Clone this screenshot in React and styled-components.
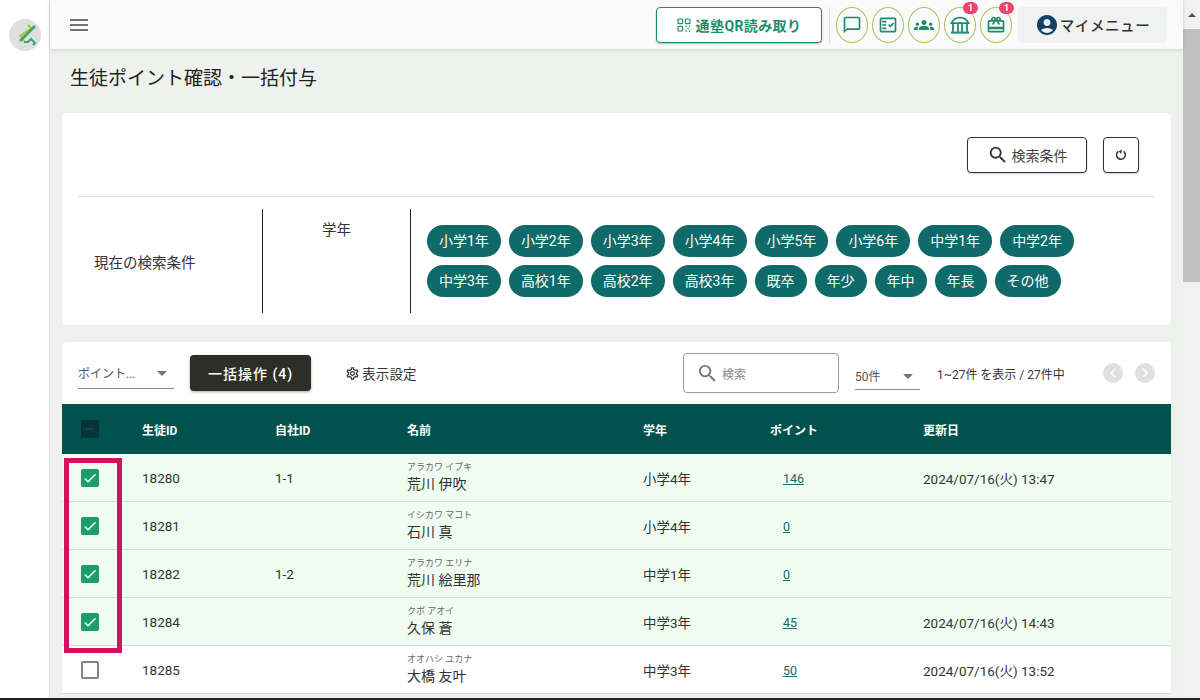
import styled, { createGlobalStyle } from 'styled-components';
import {
  MdMenu,
  MdOutlineChatBubbleOutline,
  MdOutlineFactCheck,
  MdGroups,
  MdAccountCircle,
  MdSearch,
  MdOutlineSettings,
  MdArrowDropDown,
  MdChevronLeft,
  MdChevronRight,
  MdCheck,
  MdRemove,
  MdOutlineRedeem,
} from 'react-icons/md';

const FONT = `Roboto, "Noto Sans CJK JP", sans-serif`;

const GlobalStyle = createGlobalStyle`
  html, body {
    margin: 0;
    padding: 0;
    height: 100%;
    overflow: hidden;
  }
  body {
    font-family: ${FONT};
    color: #222;
  }
  * {
    box-sizing: border-box;
  }
`;

const Page = styled.div`
  display: flex;
  width: 1200px;
  height: 700px;
  overflow: hidden;
  background: #eef1ee;
  border-bottom: 2px solid #222;
`;

const Sidebar = styled.aside`
  flex: 0 0 50px;
  background: #fff;
  border-right: 1px solid #ddd;
  padding: 19px 0 0 9px;
`;

const Main = styled.div`
  flex: 0 0 1133px;
  display: flex;
  flex-direction: column;
  min-width: 0;
`;

const ScrollTrack = styled.div`
  flex: 0 0 17px;
  background: #f1f1f1;
  display: flex;
  flex-direction: column;
  align-items: center;
`;

const ScrollArrow = styled.div`
  height: 17px;
  margin-top: 0;
  padding-top: 6px;
  width: 100%;
  display: flex;
  justify-content: center;

  &::before {
    content: '';
    border-left: 4px solid transparent;
    border-right: 4px solid transparent;
    border-bottom: 4px solid #505050;
  }
`;

const ScrollThumb = styled.div`
  width: 100%;
  height: 253px;
  margin-top: 12px;
  background: #c1c1c1;
`;

const Header = styled.header`
  flex: 0 0 49px;
  background: #fafafa;
  display: flex;
  align-items: center;
  padding: 0 16px 0 17px;
  box-shadow: 0 1px 4px rgba(0, 0, 0, 0.14);
  position: relative;
`;

const MenuButton = styled.div`
  display: flex;
  color: #757575;
  font-size: 24px;
  margin-right: auto;
`;

const QrButton = styled.button`
  display: flex;
  align-items: center;
  justify-content: center;
  gap: 5px;
  width: 166px;
  height: 36px;
  background: #fff;
  border: 1px solid #1c8c6b;
  border-radius: 4px;
  color: #1c8c6b;
  font: 700 14px ${FONT};
  letter-spacing: 0.4px;
  box-shadow: 0 1px 2px rgba(0, 0, 0, 0.25);
`;

const HeaderDivider = styled.div`
  width: 1px;
  height: 36px;
  background: #ddd;
  margin: 0 6px 0 7px;
`;

const IconGroup = styled.div`
  display: flex;
  gap: 0;
`;

const RoundIcon = styled.div`
  position: relative;
  width: 32px;
  height: 36px;
  margin-right: 4px;
  border: 1px solid #a6c55a;
  border-radius: 50%;
  display: flex;
  align-items: center;
  justify-content: center;
  color: #1c8c6b;
  font-size: 20px;
`;

const Badge = styled.span`
  position: absolute;
  top: -6px;
  right: -3px;
  width: 15px;
  height: 12px;
  border-radius: 7px;
  background: #e8466f;
  color: #fff;
  font: 700 9px/12px ${FONT};
  text-align: center;
`;

const MyMenu = styled.div`
  display: flex;
  align-items: center;
  justify-content: center;
  width: 149px;
  height: 36px;
  margin-left: 2px;
  background: #f0f2f1;
  border-radius: 4px;
  color: #333;
  font-size: 14.5px;
  font-weight: 500;
  letter-spacing: 0.6px;

  svg {
    color: #143f66;
    font-size: 24px;
    margin-right: 1px;
  }
`;

const Content = styled.main`
  flex: 1;
  padding: 0 12px;
  overflow: hidden;
`;

const Title = styled.h1`
  margin: 0;
  height: 64px;
  padding: 18px 0 0 8px;
  font-size: 19px;
  font-weight: 400;
  line-height: 24px;
  color: #222;
`;

const Card = styled.section`
  background: #fff;
  border-radius: 4px;
  margin-bottom: 17px;
  box-shadow: 0 0 2px rgba(0, 0, 0, 0.05);
`;

const ConditionActions = styled.div`
  display: flex;
  justify-content: flex-end;
  gap: 16px;
  height: 84px;
  margin: 0 16px;
  padding: 24px 16px 0 0;
  border-bottom: 1px solid #ddd;
`;

const OutlineButton = styled.button`
  display: flex;
  align-items: center;
  justify-content: center;
  gap: 3px;
  width: ${(p) => p.$width}px;
  height: 36px;
  background: #fff;
  border: 1px solid #333;
  border-radius: 4px;
  color: #444;
  font: 400 14px ${FONT};
  box-shadow: 0 1px 2px rgba(0, 0, 0, 0.2);

  svg {
    color: #333;
    font-size: 22px;
  }
`;

const ConditionBody = styled.div`
  display: grid;
  grid-template-columns: 185px 148px 1fr;
  margin: 12px 16px 0;
  padding-bottom: 12px;
`;

const ConditionLabel = styled.div`
  height: 104px;
  display: flex;
  align-items: center;
  padding-left: 16px;
  font-size: 14.5px;
  color: #333;
  border-right: 1px solid #222;
`;

const ConditionKey = styled.div`
  height: 104px;
  padding-top: 12px;
  text-align: center;
  font-size: 14.5px;
  line-height: 20px;
  color: #333;
  border-right: 1px solid #222;
`;

const ChipWrap = styled.div`
  display: flex;
  flex-wrap: wrap;
  align-content: flex-start;
  gap: 8px;
  padding: 16px 0 0 16px;
`;

const Chip = styled.span`
  height: 32px;
  padding: 0 12px;
  border-radius: 16px;
  background: #0f6a69;
  color: #fff;
  font-size: 14px;
  line-height: 32px;
`;

const Toolbar = styled.div`
  display: flex;
  align-items: center;
  height: 62px;
  padding: 0 16px;
`;

const SelectBox = styled.div`
  display: flex;
  align-items: center;
  justify-content: space-between;
  width: ${(p) => p.$width}px;
  height: ${(p) => p.$height}px;
  margin-top: ${(p) => p.$top}px;
  border-bottom: 1px solid #8a8a8a;
  color: #555;
  font-size: 12px;

  svg {
    color: #757575;
    font-size: 24px;
  }
`;

const BulkButton = styled.button`
  width: 121px;
  height: 36px;
  margin-left: 16px;
  background: #2e2e28;
  border: 0;
  border-radius: 4px;
  color: #fff;
  font: 500 14px ${FONT};
  letter-spacing: 1px;
  box-shadow: 0 1px 3px rgba(0, 0, 0, 0.35);
`;

const DisplaySetting = styled.div`
  display: flex;
  align-items: center;
  gap: 2px;
  margin-left: 34px;
  margin-right: auto;
  color: #333;
  font-size: 13.5px;
  letter-spacing: 0.2px;

  svg {
    font-size: 15px;
  }
`;

const SearchBox = styled.div`
  display: flex;
  align-items: center;
  gap: 3px;
  width: 156px;
  height: 40px;
  padding-left: 12px;
  border: 1px solid #999;
  border-radius: 4px;
  color: #888;
  font-size: 12px;

  svg {
    color: #777;
    font-size: 23px;
  }
`;

const PageInfo = styled.div`
  width: 166px;
  margin-left: 17px;
  color: #333;
  font-size: 12px;
`;

const PagerDot = styled.div`
  display: flex;
  align-items: center;
  justify-content: center;
  width: 20px;
  height: 20px;
  margin-left: ${(p) => p.$gap}px;
  border-radius: 50%;
  background: #e0e0e0;
  color: #fff;
  font-size: 18px;
`;

const TableRow = styled.div`
  display: grid;
  grid-template-columns: 80px 133px 132px 236px 127px 153px 1fr;
  align-items: center;
  height: ${(p) => (p.$head ? 50 : 48)}px;
  background: ${(p) => (p.$head ? '#00524f' : p.$selected ? '#f0fcf0' : '#fff')};
  color: ${(p) => (p.$head ? '#fff' : '#333')};
  font-size: ${(p) => (p.$head ? 12 : 13.5)}px;
  font-weight: ${(p) => (p.$head ? 700 : 400)};
  border-bottom: ${(p) => (p.$head ? '0' : '1px solid #dcdcdc')};
`;

const CheckCell = styled.div`
  padding-left: 19px;
  display: flex;
`;

const CheckBox = styled.span`
  display: flex;
  align-items: center;
  justify-content: center;
  width: 18px;
  height: 18px;
  border-radius: 2px;
  background: ${(p) => (p.$state === 'on' ? '#1f9d68' : p.$state === 'mixed' ? '#04343a' : '#fff')};
  border: ${(p) => (p.$state === 'off' ? '2px solid #8c7c8c' : '0')};
  color: ${(p) => (p.$state === 'mixed' ? '#1d4a4d' : '#fff')};
  font-size: 16px;
`;

const Kana = styled.div`
  font-size: 9px;
  line-height: 11px;
  color: #666;
`;

const NameText = styled.div`
  font-size: 14px;
  line-height: 18px;
  margin-top: 2px;
  color: #333;
`;

const PointLink = styled.a`
  margin-left: 13px;
  color: #22666a;
  font-size: 12.5px;
  text-decoration: underline;
`;

const Highlight = styled.div`
  position: absolute;
  left: 64px;
  top: 458px;
  width: 58px;
  height: 195px;
  border: 5px solid #d6105f;
  pointer-events: none;
`;

const QrIcon = () => (
  <svg width="14" height="14" viewBox="0 0 14 14" fill="none" stroke="currentColor" strokeWidth="1.2">
    <rect x="1" y="1" width="4.6" height="4.6" rx="1" />
    <rect x="8.4" y="1" width="4.6" height="4.6" rx="1" />
    <rect x="1" y="8.4" width="4.6" height="4.6" rx="1" />
    <path d="M8.4 8.4h1.4M12 8.4h1M10.4 10.6h1.4M8.4 13h1.4M12 13h1" strokeWidth="1.4" />
  </svg>
);

const BankIcon = () => (
  <svg width="22" height="22" viewBox="0 0 22 22" fill="none" stroke="currentColor" strokeWidth="1.8">
    <path d="M2.5 9.2c1.4-3.4 4.6-5.6 8.5-5.6s7.1 2.2 8.5 5.6z" />
    <path d="M4 9.5V18M9 9.5V18M13 9.5V18M18 9.5V18" />
    <path d="M2 18.6h18" strokeWidth="2" />
  </svg>
);

const ReloadIcon = () => (
  <svg width="14" height="14" viewBox="0 0 14 14" fill="none" stroke="currentColor" strokeWidth="1.5">
    <path d="M4.2 3.4A4.4 4.4 0 1 0 9.6 3.3" />
    <path d="M8 1.6l-3.4 1.8 2.6 2.4" fill="currentColor" stroke="none" />
  </svg>
);

const Logo = () => (
  <svg width="32" height="32" viewBox="0 0 32 32" fill="none">
    <circle cx="16" cy="16" r="16" fill="#dfdfdf" />
    <path d="M19 6l3.5 3.5-11 7 3.5 5.5" stroke="#a4cb3c" strokeWidth="2.2" />
    <path d="M11 22L26 7" stroke="#3aa86d" strokeWidth="2.6" />
    <path d="M15 23h4l3-3 4 4-2 2" stroke="#35a87c" strokeWidth="2" />
  </svg>
);

const chips = [
  '小学1年', '小学2年', '小学3年', '小学4年', '小学5年', '小学6年', '中学1年', '中学2年',
  '中学3年', '高校1年', '高校2年', '高校3年', '既卒', '年少', '年中', '年長', 'その他',
];

const students = [
  { id: '18280', own: '1-1', kana: 'アラカワ イブキ', name: '荒川 伊吹', grade: '小学4年', point: '146', date: '2024/07/16(火) 13:47', checked: true },
  { id: '18281', own: '', kana: 'イシカワ マコト', name: '石川 真', grade: '小学4年', point: '0', date: '', checked: true },
  { id: '18282', own: '1-2', kana: 'アラカワ エリナ', name: '荒川 絵里那', grade: '中学1年', point: '0', date: '', checked: true },
  { id: '18284', own: '', kana: 'クボ アオイ', name: '久保 蒼', grade: '中学3年', point: '45', date: '2024/07/16(火) 14:43', checked: true },
  { id: '18285', own: '', kana: 'オオハシ ユカナ', name: '大橋 友叶', grade: '中学3年', point: '50', date: '2024/07/16(火) 13:52', checked: false },
];

export default function App() {
  return (
    <>
      <GlobalStyle />
      <Page>
        <Sidebar>
          <Logo />
        </Sidebar>
        <Main>
          <Header>
            <MenuButton>
              <MdMenu />
            </MenuButton>
            <QrButton>
              <QrIcon />
              通塾QR読み取り
            </QrButton>
            <HeaderDivider />
            <IconGroup>
              <RoundIcon><MdOutlineChatBubbleOutline /></RoundIcon>
              <RoundIcon><MdOutlineFactCheck /></RoundIcon>
              <RoundIcon><MdGroups /></RoundIcon>
              <RoundIcon><BankIcon /><Badge>1</Badge></RoundIcon>
              <RoundIcon><MdOutlineRedeem /><Badge>1</Badge></RoundIcon>
            </IconGroup>
            <MyMenu>
              <MdAccountCircle />
              マイメニュー
            </MyMenu>
          </Header>
          <Content>
            <Title>生徒ポイント確認・一括付与</Title>
            <Card>
              <ConditionActions>
                <OutlineButton $width={120}>
                  <MdSearch />
                  検索条件
                </OutlineButton>
                <OutlineButton $width={36}>
                  <ReloadIcon />
                </OutlineButton>
              </ConditionActions>
              <ConditionBody>
                <ConditionLabel>現在の検索条件</ConditionLabel>
                <ConditionKey>学年</ConditionKey>
                <ChipWrap>
                  {chips.map((c) => (
                    <Chip key={c}>{c}</Chip>
                  ))}
                </ChipWrap>
              </ConditionBody>
            </Card>
            <Card>
              <Toolbar>
                <SelectBox $width={96} $height={32} $top={0}>
                  ポイント...
                  <MdArrowDropDown />
                </SelectBox>
                <BulkButton>一括操作 (4)</BulkButton>
                <DisplaySetting>
                  <MdOutlineSettings />
                  表示設定
                </DisplaySetting>
                <SearchBox>
                  <MdSearch />
                  検索
                </SearchBox>
                <SelectBox $width={65} $height={28} $top={6} style={{ marginLeft: 16 }}>
                  50件
                  <MdArrowDropDown />
                </SelectBox>
                <PageInfo>1~27件 を表示 / 27件中</PageInfo>
                <PagerDot $gap={0}><MdChevronLeft /></PagerDot>
                <PagerDot $gap={12}><MdChevronRight /></PagerDot>
              </Toolbar>
              <TableRow $head>
                <CheckCell>
                  <CheckBox $state="mixed"><MdRemove /></CheckBox>
                </CheckCell>
                <div>生徒ID</div>
                <div>自社ID</div>
                <div>名前</div>
                <div>学年</div>
                <div>ポイント</div>
                <div>更新日</div>
              </TableRow>
              {students.map((s) => (
                <TableRow key={s.id} $selected={s.checked}>
                  <CheckCell>
                    <CheckBox $state={s.checked ? 'on' : 'off'}>
                      {s.checked && <MdCheck />}
                    </CheckBox>
                  </CheckCell>
                  <div>{s.id}</div>
                  <div>{s.own}</div>
                  <div>
                    <Kana>{s.kana}</Kana>
                    <NameText>{s.name}</NameText>
                  </div>
                  <div>{s.grade}</div>
                  <div>
                    <PointLink>{s.point}</PointLink>
                  </div>
                  <div>{s.date}</div>
                </TableRow>
              ))}
            </Card>
          </Content>
        </Main>
        <ScrollTrack>
          <ScrollArrow />
          <ScrollThumb />
        </ScrollTrack>
        <Highlight />
      </Page>
    </>
  );
}
